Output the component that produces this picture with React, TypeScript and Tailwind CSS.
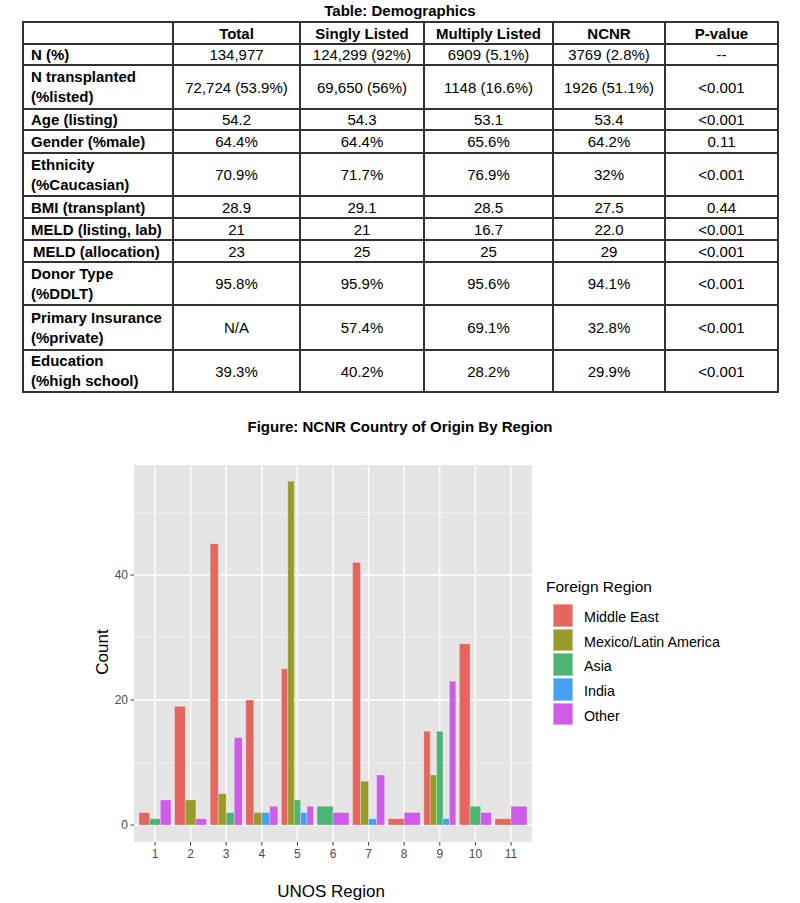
import React from 'react';

type Row = { label: string[]; vals: string[]; h: number; indent?: boolean };

const rows: Row[] = [
  { label: ['N (%)'], vals: ['134,977', '124,299 (92%)', '6909 (5.1%)', '3769 (2.8%)', '--'], h: 21 },
  { label: ['N transplanted', '(%listed)'], vals: ['72,724 (53.9%)', '69,650 (56%)', '1148 (16.6%)', '1926 (51.1%)', '<0.001'], h: 44 },
  { label: ['Age (listing)'], vals: ['54.2', '54.3', '53.1', '53.4', '<0.001'], h: 21 },
  { label: ['Gender (%male)'], vals: ['64.4%', '64.4%', '65.6%', '64.2%', '0.11'], h: 23 },
  { label: ['Ethnicity', '(%Caucasian)'], vals: ['70.9%', '71.7%', '76.9%', '32%', '<0.001'], h: 43 },
  { label: ['BMI (transplant)'], vals: ['28.9', '29.1', '28.5', '27.5', '0.44'], h: 22 },
  { label: ['MELD (listing, lab)'], vals: ['21', '21', '16.7', '22.0', '<0.001'], h: 22 },
  { label: ['MELD (allocation)'], vals: ['23', '25', '25', '29', '<0.001'], h: 22, indent: true },
  { label: ['Donor Type', '(%DDLT)'], vals: ['95.8%', '95.9%', '95.6%', '94.1%', '<0.001'], h: 43 },
  { label: ['Primary Insurance', '(%private)'], vals: ['N/A', '57.4%', '69.1%', '32.8%', '<0.001'], h: 45 },
  { label: ['Education', '(%high school)'], vals: ['39.3%', '40.2%', '28.2%', '29.9%', '<0.001'], h: 42 },
];

const headers = ['Total', 'Singly Listed', 'Multiply Listed', 'NCNR', 'P-value'];
const colWidths = [150, 127, 124, 129, 112, 113];

const series = [
  { name: 'Middle East', color: '#E3665F' },
  { name: 'Mexico/Latin America', color: '#989A2B' },
  { name: 'Asia', color: '#4DB574' },
  { name: 'India', color: '#43A1F0' },
  { name: 'Other', color: '#CF5CE8' },
];

// counts per UNOS region, null = no bar
const data: (number | null)[][] = [
  [2, null, 1, null, 4],
  [19, 4, null, null, 1],
  [45, 5, 2, null, 14],
  [20, 2, null, 2, 3],
  [25, 55, 4, 2, 3],
  [null, null, 3, null, 2],
  [42, 7, null, 1, 8],
  [1, null, null, null, 2],
  [15, 8, 15, 1, 23],
  [29, null, 3, null, 2],
  [1, null, null, null, 3],
];

const x0 = 155;
const step = 35.6;
const yZero = 823;
const perUnit = 6.25;
const yOf = (v: number) => yZero - v * perUnit;

function Chart() {
  const font = '"Liberation Sans", Arial, sans-serif';
  return (
    <svg width={540} height={468} viewBox="0 435 540 468" style={{ fontFamily: font }}>
      <rect x={134} y={463} width={398} height={377} fill="#E5E5E5" />
      {[10, 30, 50].map((v) => (
        <line key={v} x1={134} x2={532} y1={yOf(v)} y2={yOf(v)} stroke="#F7F7F7" strokeWidth={0.7} />
      ))}
      {[0, 20, 40].map((v) => (
        <line key={v} x1={134} x2={532} y1={yOf(v)} y2={yOf(v)} stroke="#FFFFFF" strokeWidth={1.3} />
      ))}
      {data.map((_, i) => (
        <line key={i} x1={x0 + i * step} x2={x0 + i * step} y1={463} y2={840} stroke="#FFFFFF" strokeWidth={1.3} />
      ))}
      {data.map((group, i) => {
        const present = group.map((v, k) => ({ v, k })).filter((d) => d.v !== null);
        const total = step * 0.9;
        const w = total / present.length;
        const left = x0 + i * step - total / 2;
        return present.map((d, j) => (
          <rect
            key={`${i}-${d.k}`}
            x={left + j * w}
            y={yOf(d.v as number)}
            width={w}
            height={(d.v as number) * perUnit}
            fill={series[d.k].color}
            stroke="rgba(255,255,255,0.35)"
            strokeWidth={0.8}
          />
        ));
      })}
      {[0, 20, 40].map((v) => (
        <g key={v}>
          <line x1={130.5} x2={134} y1={yOf(v)} y2={yOf(v)} stroke="#333" strokeWidth={1} />
          <text x={128} y={yOf(v)} textAnchor="end" dominantBaseline="central" fontSize={12} fill="#4D4D4D">
            {v}
          </text>
        </g>
      ))}
      {data.map((_, i) => (
        <g key={i}>
          <line x1={x0 + i * step} x2={x0 + i * step} y1={840} y2={843.5} stroke="#333" strokeWidth={1} />
          <text x={x0 + i * step} y={852} textAnchor="middle" dominantBaseline="central" fontSize={12} fill="#4D4D4D">
            {i + 1}
          </text>
        </g>
      ))}
      <text
        x={102}
        y={650}
        textAnchor="middle"
        dominantBaseline="central"
        fontSize={17}
        fill="#000"
        transform="rotate(-90 102 650)"
      >
        Count
      </text>
      <text x={331} y={889} textAnchor="middle" dominantBaseline="central" fontSize={17} fill="#000">
        UNOS Region
      </text>
    </svg>
  );
}

function Legend() {
  return (
    <div className="pt-[140px] pl-[6px]">
      <div className="text-[15.5px] leading-[20px] text-black">Foreign Region</div>
      <div className="mt-[7px] flex flex-col">
        {series.map((s) => (
          <div key={s.name} className="flex h-[24.7px] items-start">
            <div
              className="ml-[7px] h-[22.5px] w-[20px] border border-white/40"
              style={{ backgroundColor: s.color }}
            />
            <span className="ml-[11px] pt-[5px] text-[14.3px] leading-[16px] text-black">{s.name}</span>
          </div>
        ))}
      </div>
    </div>
  );
}

export default function App() {
  return (
    <div className="h-[903px] w-[800px] overflow-hidden bg-white font-['Liberation_Sans',Arial,sans-serif] text-black">
      <div className="text-center text-[15px] font-bold leading-[21px]">Table: Demographics</div>
      <table className="ml-[22px] w-[755px] table-fixed border-collapse text-[15px] leading-[19px]">
        <colgroup>
          {colWidths.map((w, i) => (
            <col key={i} style={{ width: w }} />
          ))}
        </colgroup>
        <thead>
          <tr>
            <th className="h-[22px] border-2 border-[#333] p-0" />
            {headers.map((h) => (
              <th key={h} className="h-[22px] border-2 border-[#333] p-0 text-center font-bold">
                {h}
              </th>
            ))}
          </tr>
        </thead>
        <tbody>
          {rows.map((r) => (
            <tr key={r.label.join(' ')}>
              <td
                className={`border-2 border-[#333] py-0 pr-1 text-left align-middle font-bold ${r.indent ? 'pl-[9px]' : 'pl-[7px]'}`}
                style={{ height: r.h }}
              >
                {r.label.map((l) => (
                  <div key={l} className={r.label.length > 1 ? 'leading-[20px]' : ''}>
                    {l}
                  </div>
                ))}
              </td>
              {r.vals.map((v, i) => (
                <td key={i} className="border-2 border-[#333] p-0 text-center align-middle" style={{ height: r.h }}>
                  {v}
                </td>
              ))}
            </tr>
          ))}
        </tbody>
      </table>
      <div className="mt-[23px] text-center text-[15px] font-bold leading-[21px]">
        Figure: NCNR Country of Origin By Region
      </div>
      <div className="flex">
        <Chart />
        <Legend />
      </div>
    </div>
  );
}
